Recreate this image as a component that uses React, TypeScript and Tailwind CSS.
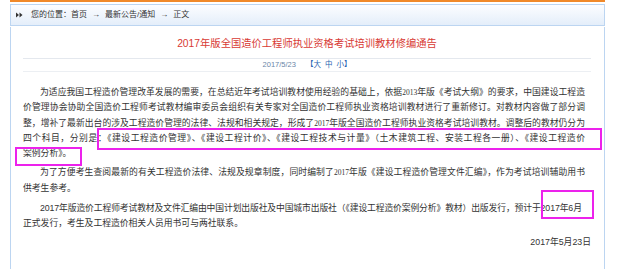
import React from "react";

const J = "whitespace-nowrap [text-align-last:justify] text-justify";

function Serif({ children }: { children: React.ReactNode }) {
  return <span className="font-['Liberation_Serif'] text-[7.5px]">{children}</span>;
}

export default function App() {
  return (
    <div className="relative w-[630px] h-[269px] overflow-hidden bg-white font-['Liberation_Sans','Noto_Sans_CJK_SC',sans-serif] text-[#333]">
      <div className="ml-[10px] w-[595px] h-full flex flex-col">
        <div className="h-[2px] bg-[#f0892a]" />
        <div className="mt-[2px] h-[22px] border border-[#bcd5f1] bg-gradient-to-b from-[#fcfdff] to-[#e4eefa] flex items-center pl-[5px] text-[8px] text-[#333]">
          <svg width="7" height="6" viewBox="0 0 7 6" className="mr-[8px]">
            <polygon points="0,0.5 3,3 0,5.5" fill="#333" />
            <polygon points="3.5,0.5 6.5,3 3.5,5.5" fill="#333" />
          </svg>
          <span>您的位置：首页</span>
          <span className="mx-[5px]">→</span>
          <span>最新公告/通知</span>
          <span className="mx-[5px]">→</span>
          <span>正文</span>
        </div>
        <div className="mt-[1px] flex-1 border-x border-[#bcd5f1] pl-[12px] pr-[13px] pt-[10px]">
          <div className="h-[14px] leading-[14px] text-center text-[10.3px] text-[#d83a34]">
            2017年版全国造价工程师执业资格考试培训教材修编通告
          </div>
          <div className="mt-[7px] h-px bg-[#e4e8ee]" />
          <div className="mt-[1px] h-[10px] leading-[10px] flex justify-center text-[7.5px]">
            <span className="text-[#6b86a8]">2017/5/23</span>
            <span className="ml-[10px] flex text-[#2a64b0]">
              <span>【大</span>
              <span className="ml-[4px]">中</span>
              <span className="ml-[4px]">小】</span>
            </span>
          </div>
          <div className="mt-[1px] h-px bg-[#eceff3]" />
          <div className="mt-[13px] w-[562px] text-[8.8px] leading-[15.3px] text-[#333]">
            <div>
              <div className={`${J} pl-[17px]`}>
                为适应我国工程造价管理改革发展的需要，在总结近年考试培训教材使用经验的基础上，依据<Serif>2013</Serif>年版《考试大纲》的要求，中国建设工程造
              </div>
              <div className={J}>
                价管理协会协助全国造价工程师考试教材编审委员会组织有关专家对全国造价工程师执业资格培训教材进行了重新修订。对教材内容做了部分调
              </div>
              <div className={J}>
                整，增补了最新出台的涉及工程造价管理的法律、法规和相关规定，形成了<Serif>2017</Serif>年版全国造价工程师执业资格考试培训教材。调整后的教材仍分为
              </div>
              <div className={J}>
                四个科目，分别是：《建设工程造价管理》、《建设工程计价》、《建设工程技术与计量》（土木建筑工程、安装工程各一册）、《建设工程造价
              </div>
              <div className="whitespace-nowrap">案例分析》。</div>
            </div>
            <div className="mt-[4px]">
              <div className={`${J} pl-[17px]`}>
                为了方便考生查阅最新的有关工程造价法律、法规及规章制度，同时编制了<Serif>2017</Serif>年版《建设工程造价管理文件汇编》，作为考试培训辅助用书
              </div>
              <div className="whitespace-nowrap">供考生参考。</div>
            </div>
            <div className="mt-[5px]">
              <div className="whitespace-nowrap pl-[17px] tracking-[-0.12px]">
                2017年版造价工程师考试教材及文件汇编由中国计划出版社及中国城市出版社（《建设工程造价案例分析》教材）出版发行，预计于2017年6月
              </div>
              <div className="whitespace-nowrap">正式发行，考生及工程造价相关人员用书可与两社联系。</div>
            </div>
          </div>
          <div className="mt-[3px] text-right text-[8.8px] leading-[15px] text-[#333]">2017年5月23日</div>
        </div>
      </div>

      <div className="absolute left-[97px] top-[128px] w-[505px] h-[22px] border-2 border-[#ec22ec]" />
      <div className="absolute left-[15px] top-[147px] w-[67px] h-[19px] border-2 border-[#ec22ec]" />
      <div className="absolute left-[541px] top-[190px] w-[53px] h-[29px] border-2 border-[#ec22ec]" />
    </div>
  );
}
